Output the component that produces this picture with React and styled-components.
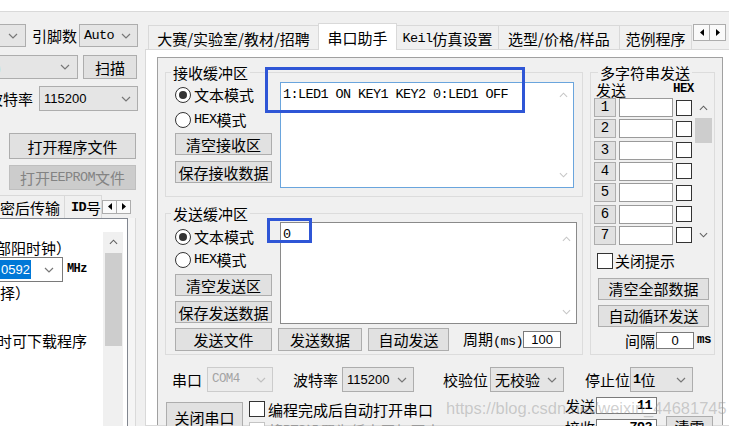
import React from 'react';
import styled, { createGlobalStyle } from 'styled-components';

const CJK = `"Noto Sans CJK SC", "Noto Sans", sans-serif`;
const MONO = `"Liberation Mono", "Noto Sans CJK SC", monospace`;
const SANS = `"Liberation Sans", "Noto Sans CJK SC", sans-serif`;

const GlobalStyle = createGlobalStyle`
  html, body { margin: 0; padding: 0; background: #f0f0f0; }
  body { font-family: ${CJK}; }
  *, *::before, *::after { box-sizing: border-box; }
`;

const Page = styled.div`
  position: relative;
  width: 729px;
  height: 426px;
  overflow: hidden;
  display: flex;
  flex-direction: column;
  background: #f0f0f0;
  color: #000;
  font-family: ${CJK};
  font-size: 15px;
  line-height: 17px;
`;

const TopStrip = styled.div`
  flex: none;
  height: 12px;
  background: #fff;
  border-bottom: 1px solid #d9d9d9;
`;

const Body = styled.div`
  flex: 1;
  min-height: 0;
  display: flex;
`;

/* ---------- shared parts ---------- */
const Row = styled.div`
  flex: none;
  display: flex;
  align-items: center;
  height: ${p => p.$h}px;
  margin-top: ${p => p.$mt || 0}px;
  margin-left: ${p => p.$ml || 0}px;
`;

const Label = styled.span`
  flex: none;
  white-space: nowrap;
  margin-left: ${p => p.$ml || 0}px;
  color: ${p => (p.$dim ? '#a0a0a0' : '#000')};
`;

const Mono = styled.span`
  font-family: ${MONO};
  font-size: ${p => p.$fs || 13.5}px;
  letter-spacing: ${p => (p.$ls === undefined ? -0.6 : p.$ls)}px;
  font-weight: ${p => (p.$bold ? 700 : 400)};
  margin-left: ${p => p.$ml || 0}px;
`;

const Num = styled.span`
  font-family: ${SANS};
  font-size: 13px;
`;

const ComboBox = styled.div`
  flex: none;
  display: flex;
  align-items: center;
  overflow: hidden;
  white-space: nowrap;
  width: ${p => p.$w}px;
  height: ${p => p.$h || 24}px;
  margin-left: ${p => p.$ml || 0}px;
  padding-left: ${p => (p.$pl === undefined ? 4 : p.$pl)}px;
  background: ${p => (p.$edit ? '#fff' : p.$disabled ? '#ececec' : '#e5e5e5')};
  border: 1px solid ${p => (p.$edit ? '#7a7a7a' : p.$disabled ? '#cccccc' : '#adadad')};
  border-left-width: ${p => (p.$cut ? 0 : 1)}px;
  color: ${p => (p.$disabled ? '#a3a3a3' : '#000')};
`;

const ChevSvg = styled.svg`
  flex: none;
  display: block;
  margin-left: ${p => (p.$push ? 'auto' : '0')};
  margin-right: ${p => p.$mr || 0}px;
`;

function Chevron({ push, mr = 6, up, color = '#777', w = 10 }) {
  return (
    <ChevSvg $push={push} $mr={push ? mr : 0} width={w} height="6" viewBox="0 0 10 6">
      <polyline
        points={up ? '1,5 5,1 9,5' : '1,1 5,5 9,1'}
        fill="none"
        stroke={color}
        strokeWidth="1.2"
      />
    </ChevSvg>
  );
}

function Tri({ right }) {
  return (
    <svg width="4" height="7" viewBox="0 0 4 7">
      <polygon points={right ? '0,0 4,3.5 0,7' : '4,0 0,3.5 4,7'} fill="#000" />
    </svg>
  );
}

const Btn = styled.button`
  flex: none;
  display: flex;
  align-items: center;
  justify-content: center;
  width: ${p => p.$w}px;
  height: ${p => p.$h || 22}px;
  margin: ${p => p.$mt || 0}px 0 0 ${p => p.$ml || 0}px;
  padding: 0;
  font: inherit;
  white-space: nowrap;
  background: ${p => (p.$disabled ? '#cccccc' : '#e1e1e1')};
  border: 1px solid ${p => (p.$disabled ? '#bfbfbf' : '#adadad')};
  color: ${p => (p.$disabled ? '#838383' : '#000')};
`;

const NumBtn = styled(Btn)`
  font-family: ${MONO};
  font-size: 14px;
  align-self: stretch;
`;

const Field = styled.div`
  flex: none;
  display: flex;
  align-items: center;
  justify-content: ${p => (p.$right ? 'flex-end' : 'center')};
  width: ${p => p.$w}px;
  height: ${p => p.$h || 17}px;
  margin: ${p => p.$mt || 0}px 0 0 ${p => p.$ml || 0}px;
  padding: 0 4px;
  background: #fff;
  border: 1px solid ${p => p.$c || '#7a7a7a'};
  font-family: ${SANS};
  font-size: 13px;
  overflow: hidden;
`;

const CheckBox = styled.span`
  flex: none;
  width: 16px;
  height: 16px;
  margin-right: ${p => (p.$mr === undefined ? 3 : p.$mr)}px;
  margin-left: ${p => p.$ml || 0}px;
  border: 1px solid ${p => (p.$dim ? '#c4c4c4' : '#333')};
  background: #fff;
  align-self: center;
`;

const RadioRow = styled.div`
  flex: none;
  display: flex;
  align-items: center;
  height: 17px;
  margin-top: ${p => p.$mt || 0}px;
  margin-left: 1px;
  white-space: nowrap;
`;

const RadioDot = styled.span`
  flex: none;
  width: 16px;
  height: 16px;
  margin-right: 3px;
  border-radius: 50%;
  border: 1px solid #333;
  background: #fff;
  display: flex;
  align-items: center;
  justify-content: center;
  &::after {
    content: '';
    width: 8px;
    height: 8px;
    border-radius: 50%;
    background: ${p => (p.$on ? '#333' : 'transparent')};
  }
`;

/* ---------- left column ---------- */
const LeftCol = styled.div`
  flex: none;
  width: 145px;
  display: flex;
  flex-direction: column;
  overflow: hidden;
`;

const MiniTab = styled.div`
  flex: none;
  display: flex;
  align-items: center;
  width: ${p => p.$w}px;
  height: 23px;
  padding-left: ${p => p.$pl || 0}px;
  overflow: hidden;
  white-space: nowrap;
  border-top: 1px solid #d9d9d9;
  border-right: 1px solid #d9d9d9;
  background: #f0f0f0;
`;

const ArrowBtn = styled.div`
  flex: none;
  width: ${p => p.$w || 15}px;
  height: ${p => p.$h || 14}px;
  margin-left: ${p => (p.$gap !== undefined ? p.$gap : -1)}px;
  align-self: ${p => (p.$top ? 'flex-start' : 'center')};
  margin-top: ${p => p.$mt || 0}px;
  display: flex;
  align-items: center;
  justify-content: center;
  background: #fafafa;
  border: 1px solid #adadad;
`;

const ListArea = styled.div`
  flex: 1;
  min-height: 0;
  display: flex;
`;

const ListBox = styled.div`
  flex: none;
  width: 128px;
  display: flex;
  background: #fff;
  border-top: 1px solid #828790;
  border-right: 1px solid #828790;
`;

const ListContent = styled.div`
  flex: 1;
  min-width: 0;
  display: flex;
  flex-direction: column;
  overflow: hidden;
`;

const ListScroll = styled.div`
  flex: none;
  width: 20px;
  margin: 13px 4px 0 0;
  background: #f0f0f0;
  display: flex;
  flex-direction: column;
  align-items: center;
`;

const ScrollCap = styled.div`
  flex: none;
  height: ${p => p.$h || 20}px;
  display: flex;
  align-items: center;
  justify-content: center;
  margin-top: ${p => (p.$end ? 'auto' : '0')};
`;

const Thumb = styled.div`
  flex: none;
  width: ${p => p.$w || 17}px;
  height: ${p => p.$h}px;
  margin-top: ${p => p.$mt || 0}px;
  background: #cdcdcd;
`;

const Selected = styled.span`
  background: #0078d7;
  color: #fff;
  padding: 1px 1px;
  font-family: ${SANS};
  font-size: 13px;
`;

const ListEdge = styled.div`
  flex: none;
  width: 8px;
  background: #f5f5f5;
  border-right: 1px solid #dadada;
`;

/* ---------- right column ---------- */
const RightCol = styled.div`
  flex: 1;
  min-width: 0;
  display: flex;
  flex-direction: column;
  margin-top: 11px;
`;

const TabStrip = styled.div`
  flex: none;
  display: flex;
  align-items: flex-end;
  height: 26px;
  padding-left: 3px;
  position: relative;
  z-index: 1;
`;

const Tab = styled.div`
  flex: none;
  display: flex;
  align-items: center;
  justify-content: center;
  width: ${p => p.$w}px;
  height: ${p => (p.$active ? 27 : 24)}px;
  margin-left: ${p => (p.$first ? 0 : -1)}px;
  margin-bottom: ${p => (p.$active ? -1 : 0)}px;
  padding-top: ${p => (p.$active ? 0 : 2)}px;
  background: ${p => (p.$active ? '#fff' : '#f0f0f0')};
  border: 1px solid #d9d9d9;
  border-bottom: none;
  white-space: nowrap;
  position: relative;
  z-index: ${p => (p.$active ? 2 : 1)};
`;

const TabBody = styled.div`
  flex: 1;
  min-height: 0;
  display: flex;
  background: #fff;
  border: 1px solid #d9d9d9;
  border-right: none;
  padding: 7px 0 0 11px;
`;

const Dialog = styled.div`
  flex: none;
  width: 566px;
  display: flex;
  flex-direction: column;
  background: #f0f0f0;
  border: 1px solid #a0a0a0;
  border-bottom: none;
  padding: 6px 0 0 7px;
`;

const TopArea = styled.div`
  flex: none;
  display: flex;
  align-items: flex-start;
  gap: 7px;
`;

const GroupsCol = styled.div`
  flex: none;
  width: 418px;
  display: flex;
  flex-direction: column;
  gap: 8px;
`;

const Group = styled.fieldset`
  flex: none;
  margin: 0;
  padding: 0;
  min-width: 0;
  width: ${p => p.$w}px;
  height: ${p => p.$h}px;
  border: 1px solid #dcdcdc;
`;

const Legend = styled.legend`
  padding: 0 2px;
  margin-left: ${p => p.$ml || 5}px;
  font-size: 15px;
  line-height: 17px;
  height: 17px;
`;

const GroupRow = styled.div`
  display: flex;
  align-items: flex-start;
  padding-left: ${p => (p.$pl === undefined ? 8 : p.$pl)}px;
`;

const GroupCol = styled.div`
  display: flex;
  flex-direction: column;
  padding-left: ${p => p.$pl || 0}px;
`;

const Ctrls = styled.div`
  flex: none;
  width: 98px;
  display: flex;
  flex-direction: column;
`;

const TextBox = styled.div`
  flex: none;
  display: flex;
  width: ${p => p.$w}px;
  height: ${p => p.$h}px;
  margin: ${p => p.$mt || 0}px 0 0 ${p => p.$ml || 0}px;
  background: #fff;
  border: 1px solid ${p => (p.$focus ? '#6aa5dd' : '#8a8a8a')};
`;

const TextContent = styled.div`
  flex: 1;
  min-width: 0;
  padding: 4px 0 0 2px;
  font-family: ${MONO};
  font-size: 13.5px;
  letter-spacing: -0.6px;
  line-height: 15px;
  white-space: pre;
  overflow: hidden;
`;

const TextScroll = styled.div`
  flex: none;
  width: 20px;
  display: flex;
  flex-direction: column;
  justify-content: space-between;
  align-items: center;
  padding: ${p => p.$pt}px 0 ${p => p.$pb}px;
`;

const MultiInner = styled.div`
  display: flex;
  flex-direction: column;
`;

const MultiGrid = styled.div`
  display: grid;
  grid-template-columns: 22px 54px 16px 17px;
  grid-template-rows: repeat(7, 19px);
  column-gap: 3px;
  row-gap: 2.33px;
  margin-left: 3px;
`;

const MultiScroll = styled.div`
  grid-column: 4;
  grid-row: 1 / span 7;
  display: flex;
  flex-direction: column;
  align-items: center;
`;

const BottomCols = styled.div`
  flex: none;
  display: flex;
  align-items: flex-start;
  margin-top: 4px;
`;

const CheckCol = styled.div`
  flex: none;
  width: 316px;
  margin-left: 6px;
  display: flex;
  flex-direction: column;
`;

const CheckRow = styled.div`
  flex: none;
  display: flex;
  align-items: center;
  height: 16px;
  margin-top: ${p => p.$mt || 0}px;
  white-space: nowrap;
  color: ${p => (p.$dim ? '#9a9a9a' : '#000')};
`;

const CounterCol = styled.div`
  flex: none;
  display: flex;
  flex-direction: column;
`;

/* ---------- overlays ---------- */
const Mark = styled.div`
  position: absolute;
  left: ${p => p.$x}px;
  top: ${p => p.$y}px;
  width: ${p => p.$w}px;
  height: ${p => p.$h}px;
  border: 3px solid #2f56d6;
  pointer-events: none;
`;

const Watermark = styled.div`
  position: absolute;
  left: 446px;
  top: 399px;
  font-family: ${SANS};
  font-size: 16.5px;
  line-height: 18px;
  color: rgba(150, 150, 150, 0.45);
  white-space: nowrap;
  pointer-events: none;
`;

export default function App() {
  const rows = [1, 2, 3, 4, 5, 6, 7];
  return (
    <>
      <GlobalStyle />
      <Page>
        <TopStrip />
        <Body>
          <LeftCol>
            <Row $h={23} $mt={12}>
              <ComboBox $w={26} $h={23} $cut>
                <Chevron push mr={7} />
              </ComboBox>
              <Label $ml={6}>引脚数</Label>
              <ComboBox $w={59} $h={23} $ml={2}>
                <Mono>Auto</Mono>
                <Chevron push />
              </ComboBox>
            </Row>
            <Row $h={24} $mt={8}>
              <ComboBox $w={78} $h={24} $cut $pl={0}>
                <Label $ml={-4}>)</Label>
                <Chevron push mr={7} />
              </ComboBox>
              <Btn $w={54} $h={24} $ml={5}>扫描</Btn>
            </Row>
            <Row $h={25} $mt={7}>
              <Label $ml={-12}>波特率</Label>
              <ComboBox $w={99} $h={25} $ml={6}>
                <Num>115200</Num>
                <Chevron push />
              </ComboBox>
            </Row>
            <Row $h={26} $mt={22}>
              <Btn $w={127} $h={26} $ml={9}>打开程序文件</Btn>
            </Row>
            <Row $h={25} $mt={6}>
              <Btn $w={127} $h={25} $ml={9} $disabled>
                打开<Mono>EEPROM</Mono>文件
              </Btn>
            </Row>
            <Row $h={23} $mt={5}>
              <MiniTab $w={65}>密后传输</MiniTab>
              <MiniTab $w={37} $pl={6}>
                <Mono $bold>ID</Mono>号
              </MiniTab>
              <ArrowBtn $gap={0}><Tri /></ArrowBtn>
              <ArrowBtn><Tri right /></ArrowBtn>
            </Row>
            <ListArea>
              <ListBox>
                <ListContent>
                  <Row $h={17} $mt={20}>
                    <Label $ml={-4}>部阳时钟）</Label>
                  </Row>
                  <Row $h={25} $mt={1}>
                    <ComboBox $w={63} $h={25} $edit $cut $pl={0}>
                      <Selected>0592</Selected>
                      <Chevron push mr={8} />
                    </ComboBox>
                    <Mono $fs={12} $bold $ml={4}>MHz</Mono>
                  </Row>
                  <Row $h={17} $mt={2}>
                    <Label>择）</Label>
                  </Row>
                  <Row $h={17} $mt={31}>
                    <Label $ml={-3}>时可下载程序</Label>
                  </Row>
                </ListContent>
                <ListScroll>
                  <ScrollCap $h={20}>
                    <Chevron up color="#606060" w={9} />
                  </ScrollCap>
                  <Thumb $h={93} $mt={1} />
                </ListScroll>
              </ListBox>
              <ListEdge />
            </ListArea>
          </LeftCol>

          <RightCol>
            <TabStrip>
              <Tab $w={171} $first>大赛/实验室/教材/招聘</Tab>
              <Tab $w={79} $active>串口助手</Tab>
              <Tab $w={103}>
                <Mono>Keil</Mono>仿真设置
              </Tab>
              <Tab $w={122}>选型/价格/样品</Tab>
              <Tab $w={73}>范例程序</Tab>
              <ArrowBtn $gap={1} $top $w={17} $h={17} $mt={1}>
                <Tri />
              </ArrowBtn>
              <ArrowBtn $top $w={17} $h={17} $mt={1}>
                <Tri right />
              </ArrowBtn>
            </TabStrip>
            <TabBody>
              <Dialog>
                <TopArea>
                  <GroupsCol>
                    <Group $w={418} $h={133}>
                      <Legend>接收缓冲区</Legend>
                      <GroupRow>
                        <Ctrls>
                          <RadioRow $mt={5}>
                            <RadioDot $on />文本模式
                          </RadioRow>
                          <RadioRow $mt={8}>
                            <RadioDot /><Mono>HEX</Mono>模式
                          </RadioRow>
                          <Btn $w={97} $h={22} $ml={1} $mt={5}>清空接收区</Btn>
                          <Btn $w={97} $h={22} $ml={1} $mt={6}>保存接收数据</Btn>
                        </Ctrls>
                        <TextBox $w={294} $h={106} $mt={1} $ml={8} $focus>
                          <TextContent>1:LED1 ON KEY1 KEY2 0:LED1 OFF</TextContent>
                          <TextScroll $pt={9} $pb={9}>
                            <Chevron up color="#c6c6c6" w={9} />
                            <Chevron color="#c6c6c6" w={9} />
                          </TextScroll>
                        </TextBox>
                      </GroupRow>
                    </Group>

                    <Group $w={418} $h={150}>
                      <Legend>发送缓冲区</Legend>
                      <GroupCol $pl={8}>
                        <GroupRow $pl={0}>
                          <Ctrls>
                            <RadioRow $mt={6}>
                              <RadioDot $on />文本模式
                            </RadioRow>
                            <RadioRow $mt={6}>
                              <RadioDot /><Mono>HEX</Mono>模式
                            </RadioRow>
                            <Btn $w={97} $h={22} $ml={1} $mt={6}>清空发送区</Btn>
                            <Btn $w={97} $h={22} $ml={1} $mt={5}>保存发送数据</Btn>
                          </Ctrls>
                          <TextBox $w={297} $h={102} $ml={8}>
                            <TextContent>0</TextContent>
                            <TextScroll $pt={13} $pb={8}>
                              <Chevron up color="#c6c6c6" w={9} />
                              <Chevron color="#c6c6c6" w={9} />
                            </TextScroll>
                          </TextBox>
                        </GroupRow>
                        <Row $h={23} $mt={4}>
                          <Btn $w={97} $h={23} $ml={1}>发送文件</Btn>
                          <Btn $w={84} $h={23} $ml={6}>发送数据</Btn>
                          <Btn $w={81} $h={23} $ml={6}>自动发送</Btn>
                          <Label $ml={14}>
                            周期<Mono>(ms)</Mono>
                          </Label>
                          <Field $w={38} $ml={0}>100</Field>
                        </Row>
                      </GroupCol>
                    </Group>
                  </GroupsCol>

                  <Group $w={125} $h={291}>
                    <Legend $ml={7}>多字符串发送</Legend>
                    <MultiInner>
                      <Row $h={17}>
                        <Label $ml={5}>发送</Label>
                        <Mono $fs={12.5} $bold $ml={47}>HEX</Mono>
                      </Row>
                      <MultiGrid>
                        {rows.map(n => (
                          <React.Fragment key={n}>
                            <NumBtn $w={22} $h={19}>{n}</NumBtn>
                            <Field $w={54} $h={19} $c="#9a9a9a" />
                            <CheckBox $mr={0} />
                          </React.Fragment>
                        ))}
                        <MultiScroll>
                          <ScrollCap $h={19}>
                            <Chevron up color="#606060" w={9} />
                          </ScrollCap>
                          <Thumb $w={17} $h={25} $mt={1} />
                          <ScrollCap $h={19} $end>
                            <Chevron color="#606060" w={9} />
                          </ScrollCap>
                        </MultiScroll>
                      </MultiGrid>
                      <CheckRow $mt={8}>
                        <CheckBox $ml={6} $mr={2} />关闭提示
                      </CheckRow>
                      <Btn $w={111} $h={22} $ml={7} $mt={9}>清空全部数据</Btn>
                      <Btn $w={111} $h={22} $ml={7} $mt={5}>自动循环发送</Btn>
                      <Row $h={17} $mt={5}>
                        <Label $ml={34}>间隔</Label>
                        <Field $w={38} $ml={1}>0</Field>
                        <Mono $fs={12.5} $bold $ml={3}>ms</Mono>
                      </Row>
                    </MultiInner>
                  </Group>
                </TopArea>

                <Row $h={25} $mt={12}>
                  <Label $ml={7}>串口</Label>
                  <ComboBox $w={66} $h={25} $ml={5} $disabled>
                    <Mono $fs={12.5}>COM4</Mono>
                    <Chevron push color="#c0c0c0" />
                  </ComboBox>
                  <Label $ml={20}>波特率</Label>
                  <ComboBox $w={72} $h={25} $ml={4}>
                    <Num>115200</Num>
                    <Chevron push />
                  </ComboBox>
                  <Label $ml={29}>校验位</Label>
                  <ComboBox $w={74} $h={25} $ml={2}>
                    无校验
                    <Chevron push />
                  </ComboBox>
                  <Label $ml={21}>停止位</Label>
                  <ComboBox $w={63} $h={25} $pl={2}>
                    <Mono $bold>1</Mono>位
                    <Chevron push />
                  </ComboBox>
                </Row>

                <BottomCols>
                  <Btn $w={77} $h={30} $ml={1} $mt={6}>关闭串口</Btn>
                  <CheckCol>
                    <CheckRow $mt={5}>
                      <CheckBox />编程完成后自动打开串口
                    </CheckRow>
                    <CheckRow $mt={5} $dim>
                      <CheckBox $dim />将<Mono>RTS</Mono>设置为低电平打开串口
                    </CheckRow>
                  </CheckCol>
                  <CounterCol>
                    <Row $h={17} $mt={1}>
                      <Label>发送</Label>
                      <Field $w={61} $ml={1} $right>
                        <Mono $bold>11</Mono>
                      </Field>
                    </Row>
                    <Row $h={17} $mt={5}>
                      <Label>接收</Label>
                      <Field $w={61} $ml={1} $right>
                        <Mono $bold>792</Mono>
                      </Field>
                    </Row>
                  </CounterCol>
                  <Btn $w={47} $h={20} $ml={9} $mt={20}>清零</Btn>
                </BottomCols>
              </Dialog>
            </TabBody>
          </RightCol>
        </Body>

        <Mark $x={265} $y={67} $w={260} $h={46} />
        <Mark $x={267} $y={218} $w={45} $h={25} />
        <Watermark>https://blog.csdn.net/weixin_44681745</Watermark>
      </Page>
    </>
  );
}
